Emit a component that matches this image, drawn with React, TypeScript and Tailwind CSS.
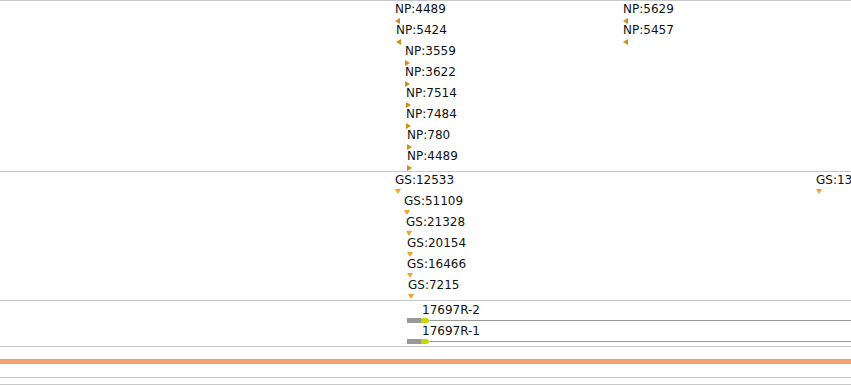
import React from 'react';

type Dir = 'left' | 'right' | 'down';

type Feat = { label: string; x: number; y: number; dir: Dir };

const npFeatures: Feat[] = [
  { label: 'NP:4489', x: 395, y: 2, dir: 'left' },
  { label: 'NP:5424', x: 396, y: 23, dir: 'left' },
  { label: 'NP:3559', x: 405, y: 44, dir: 'right' },
  { label: 'NP:3622', x: 405, y: 65, dir: 'right' },
  { label: 'NP:7514', x: 406, y: 86, dir: 'right' },
  { label: 'NP:7484', x: 406, y: 107, dir: 'right' },
  { label: 'NP:780', x: 407, y: 128, dir: 'right' },
  { label: 'NP:4489', x: 407, y: 149, dir: 'right' },
  { label: 'NP:5629', x: 623, y: 2, dir: 'left' },
  { label: 'NP:5457', x: 623, y: 23, dir: 'left' },
];

const gsFeatures: Feat[] = [
  { label: 'GS:12533', x: 395, y: 2, dir: 'down' },
  { label: 'GS:51109', x: 404, y: 23, dir: 'down' },
  { label: 'GS:21328', x: 406, y: 44, dir: 'down' },
  { label: 'GS:20154', x: 407, y: 65, dir: 'down' },
  { label: 'GS:16466', x: 407, y: 86, dir: 'down' },
  { label: 'GS:7215', x: 408, y: 107, dir: 'down' },
  { label: 'GS:13', x: 816, y: 2, dir: 'down' },
];

const Arrow: React.FC<{ dir: Dir }> = ({ dir }) => {
  if (dir === 'down') {
    return (
      <svg width="6" height="5" viewBox="0 0 6 5" className="block">
        <path d="M0 0 H6 L3 5 Z" fill="#f0a22a" />
      </svg>
    );
  }
  return (
    <svg width="5" height="6" viewBox="0 0 5 6" className="block">
      {dir === 'left' ? (
        <path d="M5 0 V6 L0 3 Z" fill="#d18d12" />
      ) : (
        <path d="M0 0 V6 L5 3 Z" fill="#d18d12" />
      )}
    </svg>
  );
};

const Feature: React.FC<{ f: Feat }> = ({ f }) => (
  <div className="absolute flex flex-col items-start" style={{ left: f.x, top: f.y }}>
    <span className="text-[12px] leading-[12px] text-[#111] whitespace-nowrap">{f.label}</span>
    <div className="mt-[3px]">
      <Arrow dir={f.dir} />
    </div>
  </div>
);

const Transcript: React.FC<{ label: string }> = ({ label }) => (
  <div className="relative h-[21px]">
    <span className="absolute left-[422px] top-[2px] text-[12px] leading-[12px] text-[#111] whitespace-nowrap">
      {label}
    </span>
    <div className="absolute left-[407px] right-0 top-[16px] flex items-center h-[5px]">
      <div className="w-[14px] h-[5px] bg-[#999999]" />
      <svg width="9" height="5" viewBox="0 0 9 5" className="block">
        <path d="M0 0 H6 L9 2.5 L6 5 H0 Z" fill="#c5d600" />
      </svg>
      <div className="flex-1 h-px bg-[#999999]" />
    </div>
  </div>
);

export default function App() {
  return (
    <div className="w-[851px] h-[385px] bg-white overflow-hidden font-['DejaVu_Sans',sans-serif]">
      <div className="border-t border-[#c8c8c8] relative h-[171px]">
        {npFeatures.map((f, i) => (
          <Feature key={i} f={f} />
        ))}
      </div>
      <div className="border-t border-[#c8c8c8] relative h-[129px] overflow-hidden">
        {gsFeatures.map((f, i) => (
          <Feature key={i} f={f} />
        ))}
      </div>
      <div className="border-t border-[#c8c8c8] h-[46px] pt-[1px]">
        <Transcript label="17697R-2" />
        <Transcript label="17697R-1" />
      </div>
      <div className="border-t border-[#c8c8c8] h-[13px]" />
      <div className="h-[5px] bg-[#f2a371]" />
      <div className="h-[13px]" />
      <div className="border-t border-[#c8c8c8] h-[7px]" />
      <div className="border-t border-[#c8c8c8]" />
    </div>
  );
}
